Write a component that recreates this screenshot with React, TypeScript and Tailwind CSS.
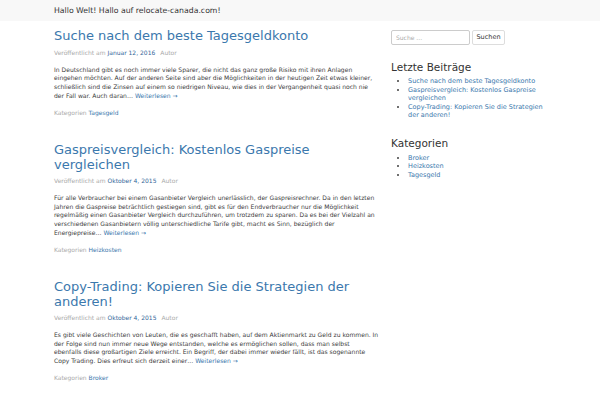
import React from 'react';

const posts = [
  {
    title: 'Suche nach dem beste Tagesgeldkonto',
    date: 'Januar 12, 2016',
    text: 'In Deutschland gibt es noch immer viele Sparer, die nicht das ganz große Risiko mit ihren Anlagen eingehen möchten. Auf der anderen Seite sind aber die Möglichkeiten in der heutigen Zeit etwas kleiner, schließlich sind die Zinsen auf einem so niedrigen Niveau, wie dies in der Vergangenheit quasi noch nie der Fall war. Auch daran…',
    cat: 'Tagesgeld',
  },
  {
    title: 'Gaspreisvergleich: Kostenlos Gaspreise vergleichen',
    date: 'Oktober 4, 2015',
    text: 'Für alle Verbraucher bei einem Gasanbieter Vergleich unerlässlich, der Gaspreisrechner. Da in den letzten Jahren die Gaspreise beträchtlich gestiegen sind, gibt es für den Endverbraucher nur die Möglichkeit regelmäßig einen Gasanbieter Vergleich durchzuführen, um trotzdem zu sparen. Da es bei der Vielzahl an verschiedenen Gasanbietern völlig unterschiedliche Tarife gibt, macht es Sinn, bezüglich der Energiepreise…',
    cat: 'Heizkosten',
  },
  {
    title: 'Copy-Trading: Kopieren Sie die Strategien der anderen!',
    date: 'Oktober 4, 2015',
    text: 'Es gibt viele Geschichten von Leuten, die es geschafft haben, auf dem Aktienmarkt zu Geld zu kommen. In der Folge sind nun immer neue Wege entstanden, welche es ermöglichen sollen, dass man selbst ebenfalls diese großartigen Ziele erreicht. Ein Begriff, der dabei immer wieder fällt, ist das sogenannte Copy Trading. Dies erfreut sich derzeit einer…',
    cat: 'Broker',
  },
];

const recent = [
  'Suche nach dem beste Tagesgeldkonto',
  'Gaspreisvergleich: Kostenlos Gaspreise vergleichen',
  'Copy-Trading: Kopieren Sie die Strategien der anderen!',
];

const cats = ['Broker', 'Heizkosten', 'Tagesgeld'];

export default function App() {
  return (
    <div className="min-h-[400px] bg-white text-[#404040]" style={{ fontFamily: '"DejaVu Sans", Verdana, sans-serif' }}>
      {/* top bar */}
      <div className="h-[21px] bg-[#f8f8f8]">
        <div className="mx-auto flex h-full w-[492px] items-center text-[7.75px] text-[#333]">
          Hallo Welt! Hallo auf relocate-canada.com!
        </div>
      </div>

      <div className="mx-auto flex w-[492px] gap-[12px]">
        <main className="w-[325px] pt-[8.25px]">
          {posts.map((p) => (
            <article key={p.title} className="mb-[26.25px]">
              <h2 className="text-[13px] leading-[14.5px] text-[#3b78ad]">{p.title}</h2>
              <div className="mt-[3.75px] text-[6px] text-[#aaa]">
                Veröffentlicht am <a className="text-[#336699]">{p.date}</a>
                <span className="ml-[5px]">Autor</span>
              </div>
              <p className="mt-[9px] text-[6.05px] leading-[8.7px] text-[#404040]">
                {p.text} <a className="text-[#3b78ad]">Weiterlesen →</a>
              </p>
              <div className="mt-[7.5px] text-[6px] text-[#aaa]">
                Kategorien <a className="text-[#3b78ad]">{p.cat}</a>
              </div>
            </article>
          ))}
        </main>

        <aside className="w-[155px] pt-[9px]">
          <form className="flex gap-[2px]">
            <input
              placeholder="Suche …"
              className="h-[15px] w-[79px] rounded-[2px] border border-[#ccc] px-[4px] text-[6px] placeholder:text-[#aaa]"
            />
            <button type="button" className="h-[15px] w-[33px] rounded-[2px] border border-[#ddd] bg-white text-[6.5px] text-[#333]">
              Suchen
            </button>
          </form>

          <h3 className="mt-[16px] text-[10.5px] leading-[12px] text-[#333]">Letzte Beiträge</h3>
          <ul className="mt-[4px] list-disc pl-[17px] text-[6.5px] leading-[8.6px] text-[#3b78ad] marker:text-[#404040]">
            {recent.map((r) => (
              <li key={r}>{r}</li>
            ))}
          </ul>

          <h3 className="mt-[17px] text-[10.5px] leading-[12px] text-[#333]">Kategorien</h3>
          <ul className="mt-[5px] list-disc pl-[17px] text-[6.5px] leading-[8.3px] text-[#3b78ad] marker:text-[#404040]">
            {cats.map((c) => (
              <li key={c}>{c}</li>
            ))}
          </ul>
        </aside>
      </div>
    </div>
  );
}
